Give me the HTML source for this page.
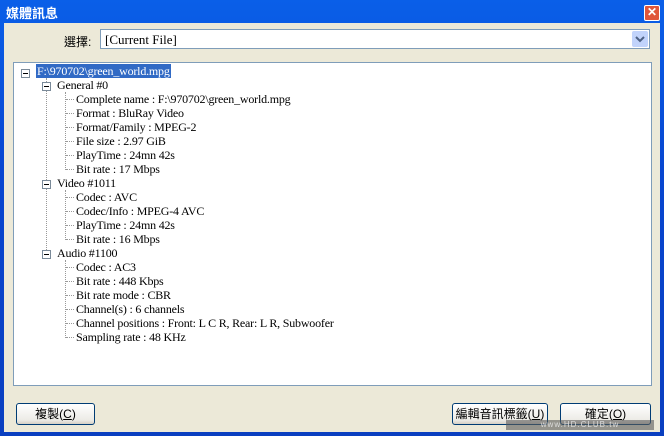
<!DOCTYPE html><html><head><meta charset="utf-8"><style>
body{margin:0;width:664px;height:436px;overflow:hidden;background:#0a4ad8;font-family:"Liberation Sans","Noto Sans CJK TC",sans-serif}
.win{position:absolute;left:0;top:0;width:664px;height:436px;background:linear-gradient(#0a5fe8,#0846d0 40%,#0a3fc0)}
.title{position:absolute;left:6px;top:3px;color:#fff;font-weight:bold;font-size:13px}
.close{position:absolute;left:644px;top:5px;width:14px;height:14px;background:#e0563a;border:1px solid #fff;border-radius:2px;color:#fff;font-size:12px;line-height:13px;text-align:center;font-weight:bold}
.body{position:absolute;left:4px;top:23px;width:656px;height:409px;background:#ece9d8}
.lab{position:absolute;left:64px;top:33px;font-size:12px}
.combo{position:absolute;left:100px;top:29px;width:550px;height:20px;background:#fff;border:1px solid #7f9db9;box-sizing:border-box}
.combo span{position:absolute;left:4px;top:2px;font:13px "Liberation Serif",serif}
.arr{position:absolute;right:1px;top:1px;width:16px;height:16px;background:#c1d3fb;border-radius:2px}
.tree{position:absolute;left:13px;top:62px;width:639px;height:324px;background:#fff;border:1px solid #7f9db9;box-sizing:border-box}
.r{position:absolute;font:12px "Liberation Serif",serif;white-space:nowrap;line-height:14px;letter-spacing:-0.2px}
.bx{position:absolute;width:7px;height:7px;border:1px solid #7a8a99;background:#fff}
.bx:after{content:"";position:absolute;left:1px;top:3px;width:5px;height:1px;background:#000}
.vl{position:absolute;border-left:1px dotted #999;width:0}
.hl{position:absolute;border-top:1px dotted #999;height:0;width:8px}
.btn{position:absolute;height:22px;border:1px solid #003c74;border-radius:3px;background:linear-gradient(#fff,#ecebe6 80%,#d6d0c5);box-sizing:border-box;font-size:12px;text-align:center;line-height:20px}
</style></head><body><div class="win">
<div class="title">媒體訊息</div><div class="close">✕</div>
<div class="body"></div>
<div class="lab">選擇:</div>
<div class="combo"><span>[Current File]</span><div class="arr"><svg width="16" height="16"><path d="M4 6l4 4 4-4" stroke="#4d6185" stroke-width="2" fill="none"/></svg></div></div>
<div class="tree"></div>
<div class="bx" style="left:21px;top:69px"></div>
<div class="r" style="left:36px;top:64px;background:#316ac5;color:#fff;padding:0 1px">F:\970702\green_world.mpg</div>
<div class="vl" style="left:46px;top:78px;height:176px"></div>
<div class="bx" style="left:42px;top:82px"></div><div class="r" style="left:57px;top:78px">General #0</div>
<div class="vl" style="left:65px;top:92px;height:78px"></div>
<div class="bx" style="left:42px;top:180px"></div><div class="r" style="left:57px;top:176px">Video #1011</div>
<div class="vl" style="left:65px;top:190px;height:50px"></div>
<div class="bx" style="left:42px;top:250px"></div><div class="r" style="left:57px;top:246px">Audio #1100</div>
<div class="vl" style="left:65px;top:260px;height:78px"></div>
<div class="r" style="left:76px;top:92px">Complete name : F:\970702\green_world.mpg</div>
<div class="r" style="left:76px;top:106px">Format : BluRay Video</div>
<div class="r" style="left:76px;top:120px">Format/Family : MPEG-2</div>
<div class="r" style="left:76px;top:134px">File size : 2.97 GiB</div>
<div class="r" style="left:76px;top:148px">PlayTime : 24mn 42s</div>
<div class="r" style="left:76px;top:162px">Bit rate : 17 Mbps</div>
<div class="r" style="left:76px;top:190px">Codec : AVC</div>
<div class="r" style="left:76px;top:204px">Codec/Info : MPEG-4 AVC</div>
<div class="r" style="left:76px;top:218px">PlayTime : 24mn 42s</div>
<div class="r" style="left:76px;top:232px">Bit rate : 16 Mbps</div>
<div class="r" style="left:76px;top:260px">Codec : AC3</div>
<div class="r" style="left:76px;top:274px">Bit rate : 448 Kbps</div>
<div class="r" style="left:76px;top:288px">Bit rate mode : CBR</div>
<div class="r" style="left:76px;top:302px">Channel(s) : 6 channels</div>
<div class="r" style="left:76px;top:316px">Channel positions : Front: L C R, Rear: L R, Subwoofer</div>
<div class="r" style="left:76px;top:330px">Sampling rate : 48 KHz</div>
<div class="hl" style="left:66px;top:99px"></div><div class="hl" style="left:66px;top:113px"></div><div class="hl" style="left:66px;top:127px"></div><div class="hl" style="left:66px;top:141px"></div><div class="hl" style="left:66px;top:155px"></div><div class="hl" style="left:66px;top:169px"></div>
<div class="hl" style="left:66px;top:197px"></div><div class="hl" style="left:66px;top:211px"></div><div class="hl" style="left:66px;top:225px"></div><div class="hl" style="left:66px;top:239px"></div>
<div class="hl" style="left:66px;top:267px"></div><div class="hl" style="left:66px;top:281px"></div><div class="hl" style="left:66px;top:295px"></div><div class="hl" style="left:66px;top:309px"></div><div class="hl" style="left:66px;top:323px"></div><div class="hl" style="left:66px;top:337px"></div>
<div class="btn" style="left:16px;top:403px;width:79px">複製(<u>C</u>)</div>
<div class="btn" style="left:452px;top:403px;width:96px">編輯音訊標籤(<u>U</u>)</div>
<div class="btn" style="left:560px;top:403px;width:91px">確定(<u>O</u>)</div>
<div style="position:absolute;left:506px;top:420px;width:148px;height:10px;background:rgba(90,90,90,.6);color:#ddd;font-size:8px;line-height:10px;text-align:center;letter-spacing:1px">www.HD.CLUB.tw</div>
</div></body></html>
